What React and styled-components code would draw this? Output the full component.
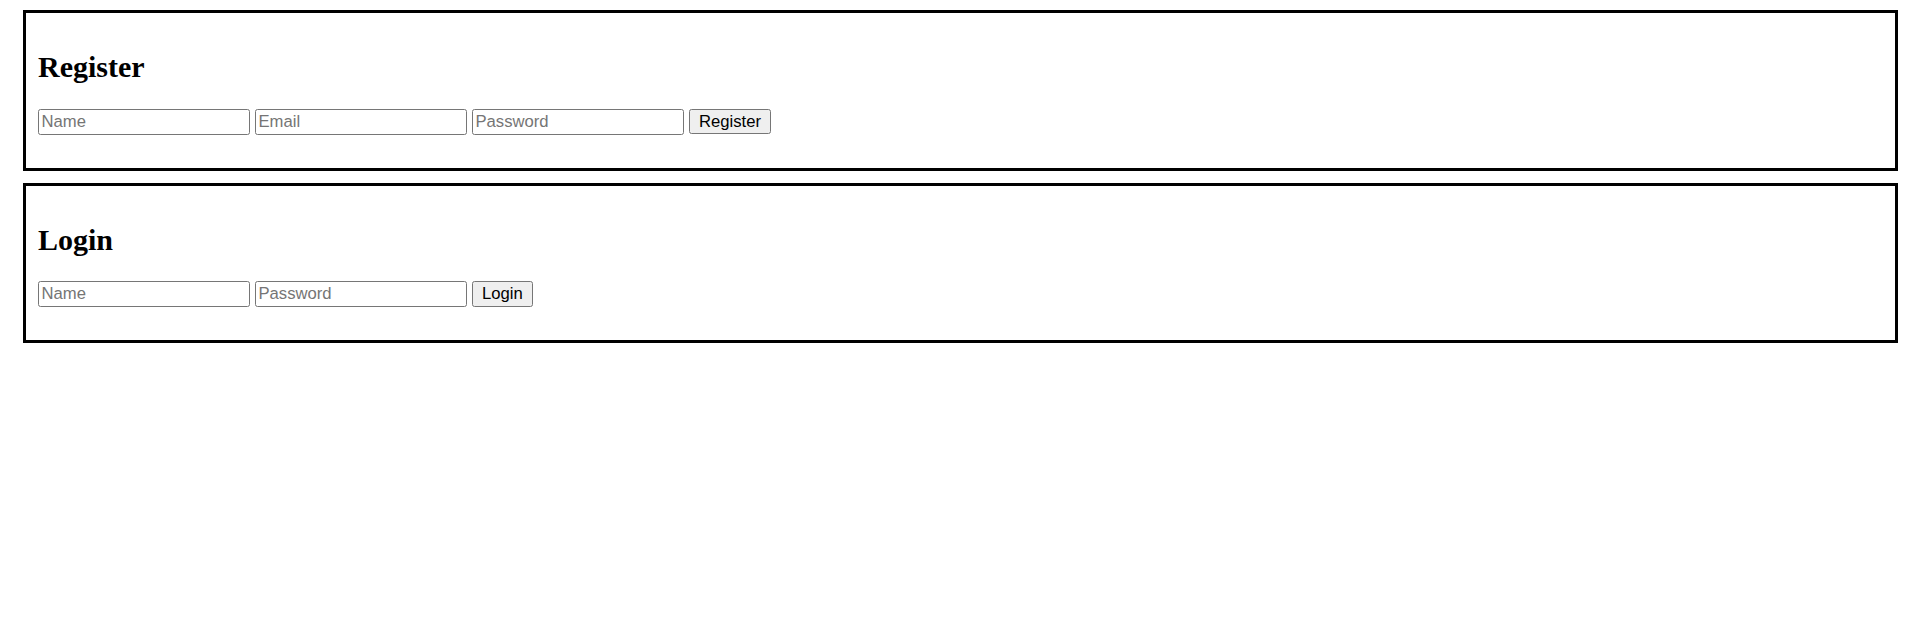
import React from "react";
import styled, { createGlobalStyle } from "styled-components";

const GlobalStyle = createGlobalStyle`
  html, body {
    background: #fff;
  }
  body {
    margin: 10px;
    font-family: "Liberation Serif", "Times New Roman", serif;
    color: #000;
  }
`;

const Card = styled.section`
  box-sizing: border-box;
  width: 1875px;
  margin: 0 0 12px 13px;
  padding: 12px;
  border: 3px solid #000;
`;

const Title = styled.h2`
  margin: 25px 0 24px;
  font-family: "Liberation Serif", "Times New Roman", serif;
  font-size: 30px;
  font-weight: 700;
  line-height: 34.5px;
`;

const Form = styled.form`
  display: flex;
  align-items: center;
  gap: 5px;
  margin: 0 0 21px;
`;

const Field = styled.input`
  box-sizing: border-box;
  width: 212px;
  height: 26px;
  margin: 0;
  padding: 1px 2.5px;
  border: 1.25px solid #767676;
  border-radius: 2.5px;
  background: #fff;
  font-family: "Liberation Sans", Arial, sans-serif;
  font-size: 16.67px;
  color: #000;

  &::placeholder {
    color: #757575;
  }
`;

const Button = styled.button`
  box-sizing: border-box;
  height: 25.5px;
  margin: 0;
  padding: 1px 9px;
  border: 1.25px solid #767676;
  border-radius: 2.5px;
  background: #efefef;
  font-family: "Liberation Sans", Arial, sans-serif;
  font-size: 16.67px;
  color: #000;
  cursor: pointer;
`;

const forms = [
  { title: "Register", fields: ["Name", "Email", "Password"] },
  { title: "Login", fields: ["Name", "Password"] },
];

export default function App() {
  return (
    <>
      <GlobalStyle />
      {forms.map((f) => (
        <Card key={f.title}>
          <Title>{f.title}</Title>
          <Form onSubmit={(e) => e.preventDefault()}>
            {f.fields.map((name) => (
              <Field
                key={name}
                type={name === "Password" ? "password" : name === "Email" ? "email" : "text"}
                placeholder={name}
              />
            ))}
            <Button type="submit">{f.title}</Button>
          </Form>
        </Card>
      ))}
    </>
  );
}
